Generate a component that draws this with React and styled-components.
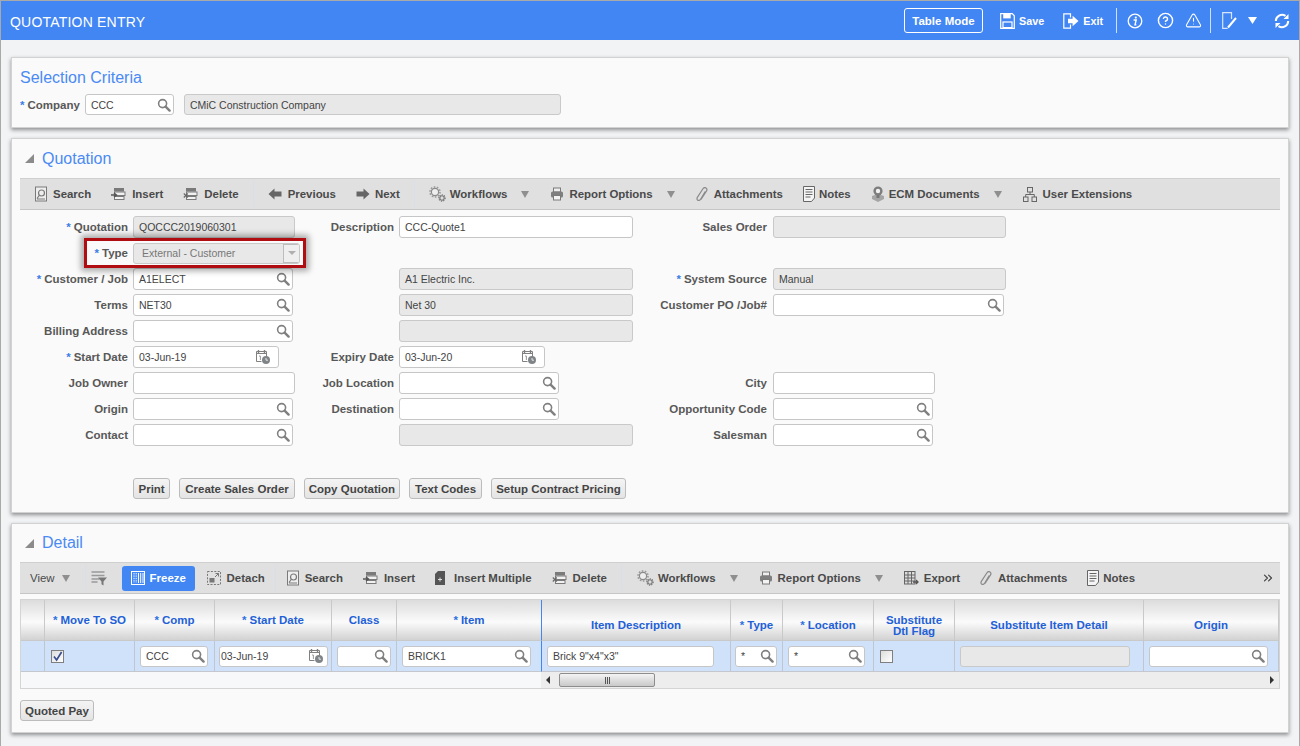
import React from "react";
import styled, { createGlobalStyle } from "styled-components";
import { CircleHelp, TriangleAlert, ChevronsRight } from "lucide-react";

const Global = createGlobalStyle`
  html, body { margin: 0; padding: 0; background: #f2f3f5; }
  * { box-sizing: border-box; }
  #root { font-family: "Liberation Sans", Arial, sans-serif; }
`;

const Page = styled.div`
  width: 1300px; height: 746px; overflow: hidden; background: #f2f3f5;
  border: 1px solid #a9a9a9; border-bottom: 0;
`;
const TopBar = styled.header`
  height: 39px; background: #4286f4; color: #fff; display: flex; align-items: center;
  padding: 0 9px; 
`;
const PageTitle = styled.div`font-size: 14px; letter-spacing: .2px; flex: 1; padding-top: 2px;`;
const TableMode = styled.div`
  width: 79px; height: 25px; margin-right: 17px; border: 1px solid #fff; border-radius: 3px;
  font-size: 11.5px; font-weight: 700; display: flex; align-items: center; justify-content: center;
`;
const TopAction = styled.div`
  display: flex; align-items: center; gap: 4px; font-size: 10.8px; font-weight: 700; margin-right: ${p => p.$mr}px;
`;
const TopSep = styled.div`width: 1px; height: 25px; background: #cfe0fb; margin-right: ${p => p.$mr}px;`;
const TopIcon = styled.div`display: flex; margin-right: ${p => p.$mr}px;`;

const Body = styled.main`
  padding: 17px 10px 0; display: flex; flex-direction: column; gap: 10px;
`;
const Panel = styled.section`
  background: #fafafa; border: 1px solid #d2d2d2; padding: 0 8px;
  box-shadow: 0 2px 4px rgba(0,0,0,.42); height: ${p => p.$h}px;
`;
const TitleRow = styled.div`
  height: ${p => p.$h}px; display: flex; align-items: center; gap: 8px; padding: ${p => p.$pt || 0}px 0 0 ${p => p.$pl}px;
`;
const Caret = styled.span`
  width: 0; height: 0; border-style: solid; border-width: 0 0 9px 9px;
  border-color: transparent transparent #8b8b8b transparent;
`;
const Title = styled.h2`margin: 0; font-size: 16px; font-weight: 400; color: #4a8af4;`;

const CompanyRow = styled.div`display: flex; align-items: center;`;
const Label = styled.label`
  font-size: 11.5px; font-weight: 700; color: #585858; text-align: right; white-space: nowrap;
  ${p => p.$inline && `margin-right: 5px;`}
`;
const Req = styled.span`color: #3b7de6; font-weight: 700; margin-right: 3px;`;

const Field = styled.div`
  width: ${p => p.$w}px; height: ${p => p.$h || 22}px; flex: none;
  background: ${p => (p.$ro ? "#e8e8e8" : "#fff")};
  border: 1px solid ${p => (p.$ro ? "#c9c9c9" : "#c6c6c6")}; border-radius: 3px;
  display: flex; align-items: center; justify-content: space-between;
  padding: 0 ${p => p.$pr ?? 2}px 0 ${p => p.$pl ?? 5}px;
  font-size: 10.5px; color: #444; overflow: hidden; white-space: nowrap;
  margin-left: ${p => p.$ml || 0}px;
`;

const Toolbar = styled.div`
  height: 32px; background: #e0e0e0; border-top: 1px solid #cfcfcf; border-bottom: 1px solid #c6c6c6;
  display: flex; align-items: center; gap: 20px; padding-left: ${p => p.$pl}px; overflow: hidden;
`;
const ToolItem = styled.div`
  display: flex; align-items: center; gap: ${p => p.$g ?? 6}px; font-size: 11.45px; font-weight: ${p => p.$plain ? 400 : 700}; color: #4a4a4a; white-space: nowrap;
  flex: none; margin-left: ${p => p.$ml || 0}px;
`;
const ToolSep = styled.div`width: 1px; height: 26px; background: #d8dfe8; margin: 0 -${p => p.$m ?? 6}px; flex: none;`;
const ToolArrow = styled.span`
  width: 0; height: 0; flex: none; margin-left: ${p => p.$ml ?? -6}px; margin-right: 1px;
  border-style: solid; border-width: 7px 4px 0 4px; border-color: #8f8f8f transparent transparent transparent;
`;
const FreezeBtn = styled.div`
  display: flex; align-items: center; gap: 5px; width: 73px; height: 25px; padding-left: 9px; background: #4286f4; color: #fff;
  font-size: 11.45px; font-weight: 700; border-radius: 3px; flex: none; margin: 0 -8px 0 -14px;
`;
const OverflowMark = styled.div`margin-left: auto; margin-right: 5px; display: flex; color: #444;`;

const FormGrid = styled.div`
  position: relative; display: grid; padding-top: 6px;
  grid-template-columns: 113px 162px 104px 234px 140px 1fr; grid-auto-rows: 22px; row-gap: 4px;
`;
const LabelCell = styled.div`
  display: flex; align-items: center; justify-content: flex-end; padding-right: ${p => p.$pr ?? 5}px;
  position: relative; z-index: 1;
`;
const FieldCell = styled.div`display: flex; align-items: center; position: relative; z-index: 1;`;
const Highlight = styled.div`
  position: absolute; left: 64px; top: 28px; width: 222px; height: 30px;
  border: 3px solid #b00d12; box-shadow: 0 0 6px 3px rgba(0,0,0,.33); z-index: 2; pointer-events: none;
`;
const SelectText = styled.span`color: #777; padding-left: 3px;`;
const SelectBtn = styled.span`
  width: 17px; height: 19px; border: 1px solid #bdbdbd; background: #efefef; display: flex; align-items: center; justify-content: center; margin-right: -1px;
  &::after { content: ""; border-style: solid; border-width: 4px 4px 0 4px; border-color: #b0b0b0 transparent transparent transparent; }
`;

const ButtonRow = styled.div`display: flex; gap: ${p => p.$g}px; padding-left: ${p => p.$pl}px; margin-top: ${p => p.$mt}px;`;
const Btn = styled.button`
  height: 21px; padding: 0 ${p => p.$px ?? 4}px; border: 1px solid #bcbcbc; border-radius: 3px; font-family: inherit;
  background: linear-gradient(#f4f4f4, #e4e4e4); font-size: 11.5px; font-weight: 700; color: #444; white-space: nowrap;
`;

const Table = styled.div`
  margin-top: 5px; display: grid; height: 90px; border: 1px solid #d4d4d4;
  grid-template-columns: 24px 90px 80px 117px 65px 145px 189px 52px 91px 81px 189px 1fr;
  grid-template-rows: 40px 32px 1fr; background: #f7f8fa;
`;
const Head = styled.div`
  display: flex; align-items: center; justify-content: center; text-align: center; line-height: 11px;
  padding-top: ${p => (p.$low ? 11 : 0)}px;
  background: linear-gradient(#dcdcdc, #fbfbfb 55%, #d2d2d2);
  font-size: 11.5px; font-weight: 700; color: #2260d8;
  border-right: 1px solid ${p => (p.$freeze ? "#4286f4" : "#c9c9c9")};
  &:last-of-type { border-right: 0; }
`;
const HeadReq = styled.span`margin-right: 3px; color: #2f72e0;`;
const Cell = styled.div`
  background: #d0e1fa; display: flex; align-items: center; padding-left: ${p => p.$pl ?? 0}px;
  border-right: 1px solid ${p => (p.$freeze ? "#4286f4" : "#c0c6cf")}; border-top: 1px solid #c9c9c9; border-bottom: 1px solid #c4c8ce;
`;
const Check = styled.span`
  width: 13px; height: 13px; border: 1px solid #7f7f7f; background: linear-gradient(135deg,#ddd,#fff); display: flex; align-items: center; justify-content: center;
`;
const ScrollSpacer = styled.div`grid-column: 1 / span 6;`;
const ScrollTrack = styled.div`
  grid-column: 7 / span 6; display: flex; align-items: center; background: #ededed; padding-left: 5px; padding-right: 5px; gap: 9px; margin-left: -1px;
`;
const ScrollThumb = styled.div`
  width: 96px; height: 14px; border: 1px solid #8d8d8d; border-radius: 2px; background: linear-gradient(#f4f4f4,#c9c9c9);
  display: flex; align-items: center; justify-content: center; gap: 1px;
`;
const Grip = styled.span`width: 1px; height: 7px; background: #555;`;
const ArrowL = styled.span`border-style: solid; border-width: 4px 4px 4px 0; border-color: transparent #333 transparent transparent;`;
const ArrowR = styled.span`margin-left: auto; border-style: solid; border-width: 4px 0 4px 4px; border-color: transparent transparent transparent #333;`;

/* ---------- drawn icons ---------- */
const G = "#7a7a7a";
const Magnifier = () => (
  <svg width="14" height="14" viewBox="0 0 14 14" fill="none">
    <circle cx="5.6" cy="5.6" r="4" stroke="#808080" strokeWidth="1.6" />
    <path d="M8.6 8.6 12.6 12.6" stroke="#808080" strokeWidth="2.4" strokeLinecap="round" />
  </svg>
);
const Calendar = () => (
  <svg width="16" height="16" viewBox="0 0 16 16" fill="none">
    <path d="M1.5 2.5h10v5M1.5 2.5v10h5" stroke="#808080" />
    <path d="M3.5 1v3M9.5 1v3" stroke="#808080" strokeWidth="1.4" />
    <path d="M1.5 4.5h10" stroke="#808080" />
    <path d="M4 7h1.4v4" stroke="#999" />
    <circle cx="11" cy="11" r="4" fill="#7f8488" />
    <path d="M11 9v2.2h2" stroke="#fff" strokeWidth=".8" />
  </svg>
);
const SearchDoc = () => (
  <svg width="14" height="16" viewBox="0 0 14 16" fill="none">
    <rect x="1.5" y="1" width="11" height="14" fill="#eee" stroke={G} />
    <circle cx="7.5" cy="7" r="3" stroke={G} strokeWidth="1.2" />
    <path d="M5.2 9.5 3 12.5M3 13h8" stroke={G} strokeWidth="1.2" />
  </svg>
);
const RowsIcon = ({ x }) => (
  <svg width="15" height="14" viewBox="0 0 15 14" fill="none">
    <rect x="3" y="1" width="10" height="3.5" fill={G} />
    <rect x="3.5" y="5" width="10.5" height="3.5" fill="#f1f1f1" stroke={G} />
    <rect x="3.5" y="9.5" width="9.5" height="3" fill="#f1f1f1" stroke={G} />
    {x ? (
      <path d="M.8 6.5l4 4M4.8 6.5l-4 4" stroke="#666" strokeWidth="1.1" />
    ) : (
      <path d="M0 8h5M3 6l2.5 2L3 10" stroke="#555" strokeWidth="1.4" />
    )}
  </svg>
);
const ArrowBlock = ({ left }) => (
  <svg width="14" height="12" viewBox="0 0 14 12">
    <path d={left ? "M0.5 6 6.5.5V3.5H13.5V8.5H6.5V11.5Z" : "M13.5 6 7.5.5V3.5H.5V8.5H7.5V11.5Z"} fill="#666" />
  </svg>
);
const Gears = () => (
  <svg width="17" height="16" viewBox="0 0 17 16" fill="none">
    <circle cx="6" cy="6" r="3.6" fill="#eee" stroke="#8a8a8a" strokeWidth="1.2" />
    <circle cx="6" cy="6" r="5" stroke="#9a9a9a" strokeWidth="1.6" strokeDasharray="1.6 1.5" />
    <circle cx="13" cy="12" r="2.2" fill="#ddd" stroke="#777" strokeWidth="1.1" />
    <circle cx="13" cy="12" r="3.2" stroke="#777" strokeWidth="1.1" strokeDasharray="1.2 1.2" />
  </svg>
);
const PrinterIcon = () => (
  <svg width="14" height="14" viewBox="0 0 14 14" fill="none">
    <rect x="3.5" y="1" width="7" height="4" fill="#eee" stroke="#7a7a7a" />
    <rect x="1" y="4.5" width="12" height="6" rx="1.6" fill="#7f7f7f" />
    <rect x="3.5" y="8.5" width="7" height="4.5" fill="#f3f3f3" stroke="#7a7a7a" />
  </svg>
);
const ClipIcon = () => (
  <svg width="12" height="15" viewBox="0 0 12 15" fill="none">
    <path d="M9.2 4.5 4.6 12.2c-.7 1.2-2.2 1.6-3 .9-.8-.7-.8-1.8-.1-3L6.8 2c.8-1.2 2.2-1.7 3.2-1.1 1 .6 1.1 2 .4 3.2L5 12.5" stroke="#8a8a8a" strokeWidth="1.2" />
  </svg>
);
const NotesIcon = () => (
  <svg width="12" height="16" viewBox="0 0 12 16" fill="none">
    <path d="M.5.5h11v11.5l-3 3.5H.5Z" fill="#f5f5f5" stroke="#666" />
    <path d="M2.5 3.5h7M2.5 6h7M2.5 8.5h7M2.5 11h5" stroke="#666" />
  </svg>
);
const EcmIcon = () => (
  <svg width="14" height="16" viewBox="0 0 14 16" fill="none">
    <path d="M1 10l6-2 6 2v3l-6 3-6-3Z" fill="#a5a5a5" />
    <circle cx="7" cy="5" r="4.6" fill="#7d7d7d" />
    <circle cx="7" cy="5" r="2.2" fill="#f2f2f2" />
    <path d="M5.5 9h3v3h-3Z" fill="#777" />
  </svg>
);
const TreeIcon = () => (
  <svg width="14" height="15" viewBox="0 0 14 15" fill="none" stroke="#666">
    <rect x="4.5" y=".5" width="5" height="4.5" />
    <rect x=".5" y="10" width="4.5" height="4.5" />
    <rect x="9" y="10" width="4.5" height="4.5" />
    <path d="M7 5v2.5M2.7 10V7.5h8.6V10" />
  </svg>
);
const FreezeIcon = () => (
  <svg width="14" height="14" viewBox="0 0 14 14" fill="none" stroke="#fff">
    <rect x=".5" y=".5" width="13" height="13" />
    <path d="M3 2v10M5.2 2v10" strokeDasharray="1.4 1" />
    <path d="M7.5 2v10M9.7 2v10M12 2v10" />
  </svg>
);
const DetachIcon = () => (
  <svg width="14" height="14" viewBox="0 0 14 14" fill="none">
    <rect x=".5" y=".5" width="13" height="13" stroke="#777" strokeDasharray="2 1.4" />
    <rect x="2.5" y="7" width="5" height="4.5" fill="#777" />
    <path d="M8 6l3.5-3.5M8.5 2.5h3v3" stroke="#777" />
  </svg>
);
const MultiIcon = () => (
  <svg width="10" height="14" viewBox="0 0 10 14">
    <path d="M3 0h7v14H0V3Z" fill="#555" />
    <path d="M3 8.5h4M5 6.5v4" stroke="#ddd" />
  </svg>
);
const ExportIcon = () => (
  <svg width="15" height="14" viewBox="0 0 15 14" fill="none">
    <rect x=".5" y=".5" width="10.5" height="12.5" fill="#ddd" stroke="#666" />
    <path d="M.5 4h10.5M.5 7h10.5M.5 10h10.5M4 .5v12.5M7.5.5v12.5" stroke="#666" />
    <path d="M9 11h4.5M12 9l2 2-2 2" stroke="#555" strokeWidth="1.3" />
  </svg>
);
const FilterIcon = () => (
  <svg width="16" height="15" viewBox="0 0 16 15" fill="none">
    <path d="M.5 1h13M.5 4.5h13M.5 8h8M.5 11h6" stroke="#999" strokeWidth="1.6" />
    <path d="M7 6.5h9l-3.5 4v4l-2-1.2v-2.8Z" fill="#777" />
  </svg>
);
const SaveIcon = () => (
  <svg width="15" height="16" viewBox="0 0 15 16" fill="none" stroke="#fff">
    <path d="M.7.7h11.5l2.1 2.1v12.5H.7Z" strokeWidth="1.2" />
    <rect x="3.2" y="1" width="7.5" height="4.4" fill="#fff" stroke="none" />
    <rect x="3" y="9" width="9" height="5.6" fill="none" strokeWidth="1.2" />
  </svg>
);
const ExitIcon = () => (
  <svg width="16" height="16" viewBox="0 0 16 16" fill="none">
    <path d="M7.5 4.5V.8H.8v14.4h6.7v-3.7" stroke="#fff" strokeWidth="1.2" />
    <path d="M5 5.7h4.6V2.8L15.5 8l-5.9 5.2v-2.9H5Z" fill="#fff" />
  </svg>
);
const InfoIcon = () => (
  <svg width="16" height="16" viewBox="0 0 16 16" fill="none">
    <circle cx="8" cy="8" r="6.8" stroke="#fff" strokeWidth="1.3" />
    <circle cx="8.8" cy="4.6" r="1.1" fill="#fff" />
    <path d="M6.6 7h2.6l-1.2 4.8h1.3" stroke="#fff" strokeWidth="1.4" />
  </svg>
);
const EditIcon = () => (
  <svg width="16" height="17" viewBox="0 0 16 17" fill="none">
    <path d="M9.5 7V.7H.7v15.6h5" stroke="#d7e5fc" strokeWidth="1.2" />
    <path d="M6 15.5l8-9.5" stroke="#fff" strokeWidth="2" />
  </svg>
);
const DownTri = () => (
  <svg width="9" height="7" viewBox="0 0 9 7"><path d="M0 0h9L4.5 7Z" fill="#fff" /></svg>
);
const RefreshIcon = () => (
  <svg width="16" height="16" viewBox="0 0 16 16" fill="none">
    <path d="M1.8 8A6.2 6.2 0 0 1 11.5 2.9" stroke="#fff" strokeWidth="2" />
    <path d="M14.2 8A6.2 6.2 0 0 1 4.5 13.1" stroke="#fff" strokeWidth="2" />
    <path d="M14.5 1v5h-5ZM1.5 15v-5h5Z" fill="#fff" />
  </svg>
);
const CheckMark = () => (
  <svg width="11" height="11" viewBox="0 0 11 11" fill="none"><path d="M2 5.5 4.6 9 9.6 1" stroke="#3a4f8f" strokeWidth="1.7" /></svg>
);

/* ---------- data ---------- */
const L = (w, text = "") => ({ w, text, icon: "s" });
const D = (w, text = "") => ({ w, text, icon: "d", pr: 7 });
const T = (w, text = "") => ({ w, text });
const R = (w, text = "") => ({ w, text, ro: true });

const form = [
  [["Quotation", 1, R(162, "QOCCC2019060301")], ["Description", 0, T(234, "CCC-Quote1")], ["Sales Order", 0, R(233)]],
  [["Type", 1, "select"], null, null],
  [["Customer / Job", 1, L(160, "A1ELECT")], ["", 0, R(234, "A1 Electric Inc.")], ["System Source", 1, R(233, "Manual")]],
  [["Terms", 0, L(160, "NET30")], ["", 0, R(234, "Net 30")], ["Customer PO /Job#", 0, L(231)]],
  [["Billing Address", 0, L(160)], ["", 0, R(234)], null],
  [["Start Date", 1, D(146, "03-Jun-19")], ["Expiry Date", 0, D(146, "03-Jun-20")], null],
  [["Job Owner", 0, T(162)], ["Job Location", 0, L(160)], ["City", 0, T(162)]],
  [["Origin", 0, L(160)], ["Destination", 0, L(160)], ["Opportunity Code", 0, L(160)]],
  [["Contact", 0, L(160)], ["", 0, R(234)], ["Salesman", 0, L(160)]],
];

const heads = [
  { t: "" }, { t: "Move To SO", r: 1 }, { t: "Comp", r: 1 }, { t: "Start Date", r: 1 }, { t: "Class" },
  { t: "Item", r: 1, freeze: 1 }, { t: "Item Description", low: 1 }, { t: "Type", r: 1, low: 1 },
  { t: "Location", r: 1, low: 1 }, { t: <>Substitute<br />Dtl Flag</>, low: 1 }, { t: "Substitute Item Detail", low: 1 }, { t: "Origin", low: 1 },
];
const cells = [
  { }, { pl: 6, check: true }, { pl: 5, f: L(68, "CCC") }, { pl: 4, f: { ...D(109, "03-Jun-19"), pl: 1, pr: 3 } },
  { pl: 5, f: L(54) }, { pl: 5, f: L(129, "BRICK1"), freeze: 1 }, { pl: 5, f: T(167, 'Brick 9"x4"x3"') },
  { pl: 4, f: L(42, "*") }, { pl: 5, f: L(77, "*") }, { pl: 6, box: true }, { pl: 5, f: R(170) }, { pl: 5, f: L(119) },
];

const FieldView = ({ f, h }) => (
  <Field $w={f.w} $ro={f.ro} $h={h} $pl={f.pl} $pr={f.pr}>
    <span>{f.text}</span>
    {f.icon === "s" && <Magnifier />}
    {f.icon === "d" && <Calendar />}
  </Field>
);

const Tool = ({ icon, children, g }) => <ToolItem $g={g}>{icon}<span>{children}</span></ToolItem>;

export default function App() {
  return (
    <Page>
      <Global />
      <TopBar>
        <PageTitle>QUOTATION ENTRY</PageTitle>
        <TableMode>Table Mode</TableMode>
        <TopAction $mr={19}><SaveIcon />Save</TopAction>
        <TopAction $mr={13}><ExitIcon />Exit</TopAction>
        <TopSep $mr={10} />
        <TopIcon $mr={14}><InfoIcon /></TopIcon>
        <TopIcon $mr={11}><CircleHelp size={17} color="#fff" /></TopIcon>
        <TopIcon $mr={8}><TriangleAlert size={17} color="#fff" strokeWidth={1.5} /></TopIcon>
        <TopSep $mr={11} />
        <TopIcon $mr={10}><EditIcon /></TopIcon>
        <TopIcon $mr={17}><DownTri /></TopIcon>
        <TopIcon $mr={0}><RefreshIcon /></TopIcon>
      </TopBar>
      <Body>
        <Panel $h={71}>
          <TitleRow $h={36} $pt={4} $pl={0}><Title>Selection Criteria</Title></TitleRow>
          <CompanyRow>
            <Label $inline><Req>*</Req>Company</Label>
            <FieldView f={L(89, "CCC")} h={21} />
            <Field $w={377} $h={21} $ro $ml={10}>CMiC Construction Company</Field>
          </CompanyRow>
        </Panel>

        <Panel $h={375}>
          <TitleRow $h={39} $pl={5}><Caret /><Title>Quotation</Title></TitleRow>
          <Toolbar $pl={14}>
            <Tool icon={<SearchDoc />} g={5}>Search</Tool>
            <Tool icon={<RowsIcon />}>Insert</Tool>
            <Tool icon={<RowsIcon x />}>Delete</Tool>
            <ToolSep />
            <Tool icon={<ArrowBlock left />}>Previous</Tool>
            <Tool icon={<ArrowBlock />} g={5}>Next</Tool>
            <ToolSep />
            <Tool icon={<Gears />} g={4}>Workflows</Tool>
            <ToolArrow />
            <Tool icon={<PrinterIcon />} g={5}>Report Options</Tool>
            <ToolArrow />
            <Tool icon={<ClipIcon />}>Attachments</Tool>
            <Tool icon={<NotesIcon />} g={4}>Notes</Tool>
            <Tool icon={<EcmIcon />} g={4}>ECM Documents</Tool>
            <ToolArrow />
            <Tool icon={<TreeIcon />}>User Extensions</Tool>
          </Toolbar>
          <FormGrid>
            <Highlight />
            {form.map((row, i) =>
              row.map((c, j) => {
                if (!c) return <React.Fragment key={`${i}-${j}`}><div /><div /></React.Fragment>;
                const [label, req, f] = c;
                return (
                  <React.Fragment key={`${i}-${j}`}>
                    <LabelCell $pr={j === 2 ? 6 : 5}>
                      {label && <Label>{req ? <Req>*</Req> : null}{label}</Label>}
                    </LabelCell>
                    <FieldCell>
                      {f === "select" ? (
                        <Field $w={167} $h={21} $ro $pr={0}>
                          <SelectText>External - Customer</SelectText>
                          <SelectBtn />
                        </Field>
                      ) : (
                        <FieldView f={f} />
                      )}
                    </FieldCell>
                  </React.Fragment>
                );
              })
            )}
          </FormGrid>
          <ButtonRow $g={9} $pl={113} $mt={32}>
            <Btn $px={4.5}>Print</Btn>
            <Btn $px={5}>Create Sales Order</Btn>
            <Btn>Copy Quotation</Btn>
            <Btn $px={5}>Text Codes</Btn>
            <Btn>Setup Contract Pricing</Btn>
          </ButtonRow>
        </Panel>

        <Panel $h={210}>
          <TitleRow $h={38} $pl={5}><Caret /><Title>Detail</Title></TitleRow>
          <Toolbar $pl={10}>
            <ToolItem $plain><span>View</span></ToolItem>
            <ToolArrow $ml={-13} />
            <ToolSep />
            <ToolItem $ml={-9}><FilterIcon /></ToolItem>
            <ToolSep />
            <FreezeBtn><FreezeIcon />Freeze</FreezeBtn>
            <Tool icon={<DetachIcon />}>Detach</Tool>
            <ToolSep $m={10} />
            <Tool icon={<SearchDoc />} g={5}>Search</Tool>
            <Tool icon={<RowsIcon />}>Insert</Tool>
            <Tool icon={<MultiIcon />} g={9}>Insert Multiple</Tool>
            <Tool icon={<RowsIcon x />}>Delete</Tool>
            <ToolSep $m={5.5} />
            <Tool icon={<Gears />} g={4}>Workflows</Tool>
            <ToolArrow />
            <Tool icon={<PrinterIcon />} g={5}>Report Options</Tool>
            <ToolArrow />
            <Tool icon={<ExportIcon />} g={5}>Export</Tool>
            <Tool icon={<ClipIcon />}>Attachments</Tool>
            <Tool icon={<NotesIcon />} g={4}>Notes</Tool>
            <OverflowMark><ChevronsRight size={14} /></OverflowMark>
          </Toolbar>
          <Table>
            {heads.map((h, i) => (
              <Head key={i} $low={h.low} $freeze={h.freeze}>
                <span>{h.r && <HeadReq>*</HeadReq>}{h.t}</span>
              </Head>
            ))}
            {cells.map((c, i) => (
              <Cell key={i} $pl={c.pl} $freeze={c.freeze}>
                {c.check && <Check><CheckMark /></Check>}
                {c.box && <Check />}
                {c.f && <FieldView f={c.f} h={21} />}
              </Cell>
            ))}
            <ScrollSpacer />
            <ScrollTrack>
              <ArrowL />
              <ScrollThumb><Grip /><Grip /><Grip /></ScrollThumb>
              <ArrowR />
            </ScrollTrack>
          </Table>
          <ButtonRow $g={0} $pl={0} $mt={11}><Btn>Quoted Pay</Btn></ButtonRow>
        </Panel>
      </Body>
    </Page>
  );
}
